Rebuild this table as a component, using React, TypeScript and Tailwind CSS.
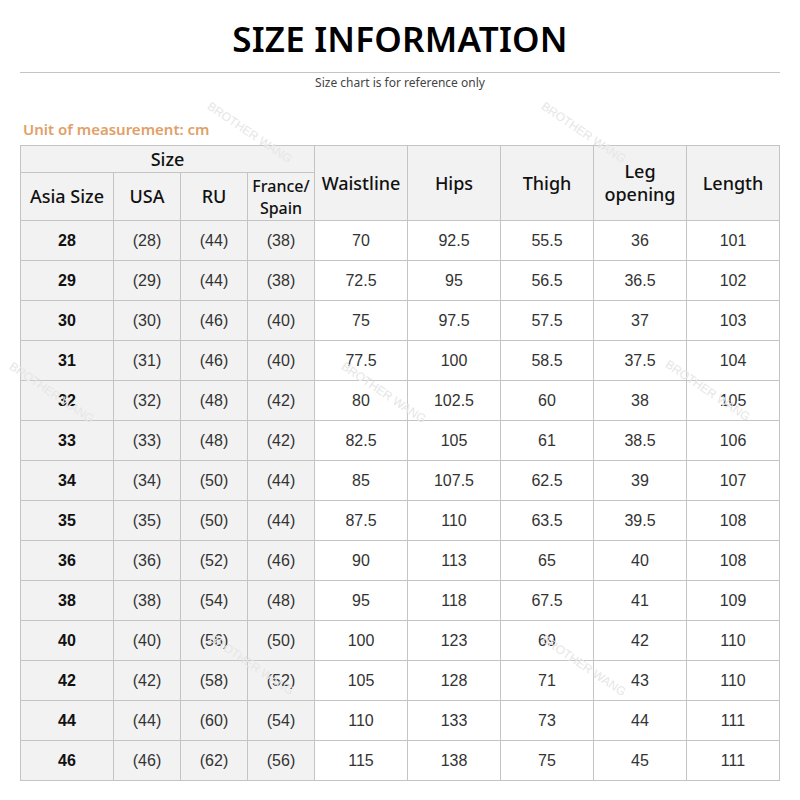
import React from 'react';

const rows = [
  ['28', '(28)', '(44)', '(38)', '70', '92.5', '55.5', '36', '101'],
  ['29', '(29)', '(44)', '(38)', '72.5', '95', '56.5', '36.5', '102'],
  ['30', '(30)', '(46)', '(40)', '75', '97.5', '57.5', '37', '103'],
  ['31', '(31)', '(46)', '(40)', '77.5', '100', '58.5', '37.5', '104'],
  ['32', '(32)', '(48)', '(42)', '80', '102.5', '60', '38', '105'],
  ['33', '(33)', '(48)', '(42)', '82.5', '105', '61', '38.5', '106'],
  ['34', '(34)', '(50)', '(44)', '85', '107.5', '62.5', '39', '107'],
  ['35', '(35)', '(50)', '(44)', '87.5', '110', '63.5', '39.5', '108'],
  ['36', '(36)', '(52)', '(46)', '90', '113', '65', '40', '108'],
  ['38', '(38)', '(54)', '(48)', '95', '118', '67.5', '41', '109'],
  ['40', '(40)', '(56)', '(50)', '100', '123', '69', '42', '110'],
  ['42', '(42)', '(58)', '(52)', '105', '128', '71', '43', '110'],
  ['44', '(44)', '(60)', '(54)', '110', '133', '73', '44', '111'],
  ['46', '(46)', '(62)', '(56)', '115', '138', '75', '45', '111'],
];

// faint watermark spots (top-left of the rotated text)
const marks = [
  { left: 212, top: 100 },
  { left: 546, top: 100 },
  { left: 14, top: 360 },
  { left: 346, top: 360 },
  { left: 670, top: 358 },
  { left: 214, top: 632 },
  { left: 546, top: 633 },
];

const head = "font-['Noto_Sans',sans-serif] font-medium text-[18px] text-[#111] leading-[23px]";
const cell = 'border border-[#c4c4c4] bg-[#f2f2f2] p-0';

export default function App() {
  return (
    <div className="relative w-[800px] h-[800px] bg-white overflow-hidden">
      <h1 className="pt-[17px] text-center font-['Noto_Sans',sans-serif] font-semibold text-[35px] leading-[44px] text-black tracking-[0.2px]">
        SIZE INFORMATION
      </h1>
      <div className="mx-[20px] mt-[11px] h-px bg-[#c4c4c4]" />
      <p className="mt-[2px] text-center font-['Noto_Sans',sans-serif] text-[12px] leading-[16px] text-[#444]">
        Size chart is for reference only
      </p>
      <p className="mt-[28px] ml-[23px] font-['Noto_Sans',sans-serif] font-semibold text-[15px] leading-[20px] text-[#e0a068]">
        Unit of measurement: cm
      </p>
      <table className="mt-[6px] ml-[20px] border-collapse table-fixed w-[760px] font-['Liberation_Sans',sans-serif] text-[16px] text-[#333]">
        <colgroup>
          <col className="w-[93px]" />
          <col className="w-[67px]" />
          <col className="w-[67px]" />
          <col className="w-[67px]" />
          <col className="w-[93px]" />
          <col className="w-[93px]" />
          <col className="w-[93px]" />
          <col className="w-[93px]" />
          <col className="w-[93px]" />
        </colgroup>
        <thead>
          <tr className="h-[27px]">
            <th colSpan={4} className={`${cell} ${head}`}>Size</th>
            <th rowSpan={2} className={`${cell} ${head}`}>Waistline</th>
            <th rowSpan={2} className={`${cell} ${head}`}>Hips</th>
            <th rowSpan={2} className={`${cell} ${head}`}>Thigh</th>
            <th rowSpan={2} className={`${cell} ${head}`}>
              Leg
              <br />
              opening
            </th>
            <th rowSpan={2} className={`${cell} ${head}`}>Length</th>
          </tr>
          <tr className="h-[48px]">
            <th className={`${cell} ${head}`}>Asia Size</th>
            <th className={`${cell} ${head}`}>USA</th>
            <th className={`${cell} ${head}`}>RU</th>
            <th className={`${cell} font-['Noto_Sans',sans-serif] font-medium text-[16px] text-[#111] leading-[22px]`}>
              France/
              <br />
              Spain
            </th>
          </tr>
        </thead>
        <tbody>
          {rows.map((r) => (
            <tr key={r[0]} className="h-[40px]">
              {r.map((v, i) => (
                <td
                  key={i}
                  className={`border border-[#c4c4c4] p-0 text-center ${i < 4 ? 'bg-[#f2f2f2]' : 'bg-white'} ${i === 0 ? 'font-bold text-[#111]' : ''}`}
                >
                  {v}
                </td>
              ))}
            </tr>
          ))}
        </tbody>
      </table>

      {marks.map((m, i) => (
        <span
          key={i}
          className="absolute rotate-[34deg] origin-top-left font-['Liberation_Sans',sans-serif] text-[12px] leading-[12px] text-[#e6e6e6] whitespace-nowrap pointer-events-none"
          style={{ left: m.left, top: m.top }}
        >
          BROTHER WANG
        </span>
      ))}
    </div>
  );
}
